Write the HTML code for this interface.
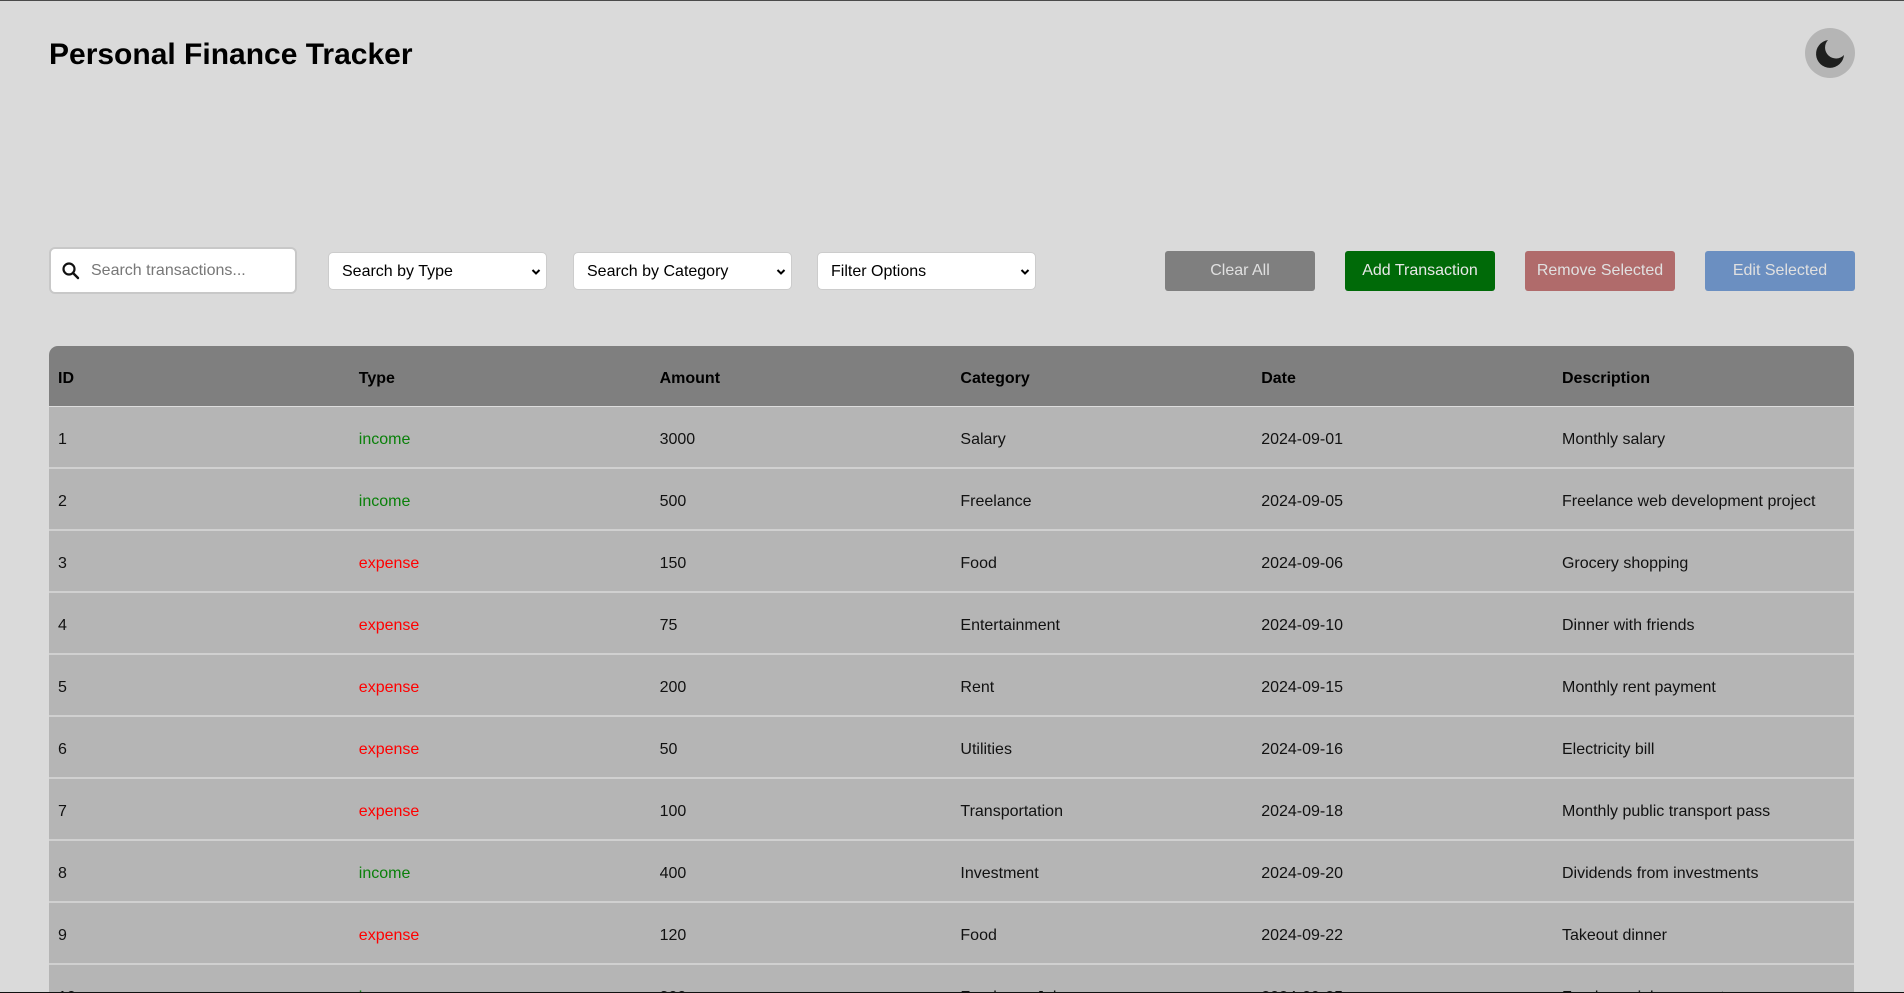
<!DOCTYPE html>
<html><head><meta charset="utf-8"><style>
*{box-sizing:border-box;margin:0;padding:0}
html,body{width:1904px;height:993px;overflow:hidden;background:#dadada;font-family:"Liberation Sans",Arial,sans-serif}
body{position:relative;border-top:1px solid #4a4a4a}
.abs{position:absolute}
h1{position:absolute;left:49px;top:36px;font-size:30px;font-weight:bold;color:#000;line-height:36px}
.moon{left:1805px;top:27px;width:50px;height:50px;border-radius:50%;background:#b5b5b5}
.search{left:49px;top:246px;width:248px;height:47px;background:#fff;border:2px solid #c8c8c8;border-radius:6px}
.search span{position:absolute;left:40px;top:13px;font-size:16px;color:#777}
.sel{top:251px;width:219px;height:38px;background:#fff;border:1px solid #ccc;border-radius:5px;font-size:16px;color:#000;padding:10px 0 0 13px}
.sel svg{position:absolute;right:5px;top:15px}
.btn{top:250px;width:150px;height:40px;border-radius:3px;font-size:16px;text-align:center;line-height:40px;color:#e0e0e0}
.table{left:49px;top:345px;width:1805px}
.hdr{height:61px;background:#7f7f7f;border-radius:9px 9px 0 0;border-bottom:1px solid #ddd;display:flex}
.row{height:62px;background:#b5b5b5;border-bottom:2px solid #d0d0d0;display:flex}
.c{width:300.8px;padding-left:9px;padding-top:3px;font-size:16px;line-height:60px;color:#111}
.hdr .c{font-weight:bold;color:#000;line-height:60px}
.in{color:#0a800a}.ex{color:#f00}
.bot{left:0;top:991px;width:1904px;height:2px;background:#111}
</style></head><body>
<h1>Personal Finance Tracker</h1>
<div class="abs moon"><svg width="50" height="50" viewBox="0 0 50 50"><path d="M23 12 A14 14 0 1 0 39 27 A9 9 0 1 1 23 12Z" fill="#1e1f1e"/></svg></div>
<div class="abs search"><svg class="abs" style="left:10px;top:12px" width="20" height="20" viewBox="0 0 20 20"><circle cx="8" cy="8" r="5.5" fill="none" stroke="#111" stroke-width="2.2"/><path d="M12 12 L17 17" stroke="#111" stroke-width="2.4" stroke-linecap="round"/></svg><span>Search transactions...</span></div>
<div class="abs sel" style="left:328px">Search by Type<svg width="10" height="8" viewBox="0 0 10 8"><path d="M1.5 2 L5 5.5 L8.5 2" stroke="#000" stroke-width="2" fill="none"/></svg></div>
<div class="abs sel" style="left:573px">Search by Category<svg width="10" height="8" viewBox="0 0 10 8"><path d="M1.5 2 L5 5.5 L8.5 2" stroke="#000" stroke-width="2" fill="none"/></svg></div>
<div class="abs sel" style="left:817px">Filter Options<svg width="10" height="8" viewBox="0 0 10 8"><path d="M1.5 2 L5 5.5 L8.5 2" stroke="#000" stroke-width="2" fill="none"/></svg></div>
<div class="abs btn" style="left:1165px;background:#7f7f7f">Clear All</div>
<div class="abs btn" style="left:1345px;background:#006a08;color:#e8e8e8">Add Transaction</div>
<div class="abs btn" style="left:1525px;background:#b06b6b">Remove Selected</div>
<div class="abs btn" style="left:1705px;background:#6b8fc1">Edit Selected</div>
<div class="abs table">
<div class="hdr"><div class="c">ID</div><div class="c">Type</div><div class="c">Amount</div><div class="c">Category</div><div class="c">Date</div><div class="c">Description</div></div>
<div class="row"><div class="c">1</div><div class="c in">income</div><div class="c">3000</div><div class="c">Salary</div><div class="c">2024-09-01</div><div class="c">Monthly salary</div></div>
<div class="row"><div class="c">2</div><div class="c in">income</div><div class="c">500</div><div class="c">Freelance</div><div class="c">2024-09-05</div><div class="c">Freelance web development project</div></div>
<div class="row"><div class="c">3</div><div class="c ex">expense</div><div class="c">150</div><div class="c">Food</div><div class="c">2024-09-06</div><div class="c">Grocery shopping</div></div>
<div class="row"><div class="c">4</div><div class="c ex">expense</div><div class="c">75</div><div class="c">Entertainment</div><div class="c">2024-09-10</div><div class="c">Dinner with friends</div></div>
<div class="row"><div class="c">5</div><div class="c ex">expense</div><div class="c">200</div><div class="c">Rent</div><div class="c">2024-09-15</div><div class="c">Monthly rent payment</div></div>
<div class="row"><div class="c">6</div><div class="c ex">expense</div><div class="c">50</div><div class="c">Utilities</div><div class="c">2024-09-16</div><div class="c">Electricity bill</div></div>
<div class="row"><div class="c">7</div><div class="c ex">expense</div><div class="c">100</div><div class="c">Transportation</div><div class="c">2024-09-18</div><div class="c">Monthly public transport pass</div></div>
<div class="row"><div class="c">8</div><div class="c in">income</div><div class="c">400</div><div class="c">Investment</div><div class="c">2024-09-20</div><div class="c">Dividends from investments</div></div>
<div class="row"><div class="c">9</div><div class="c ex">expense</div><div class="c">120</div><div class="c">Food</div><div class="c">2024-09-22</div><div class="c">Takeout dinner</div></div>
<div class="row"><div class="c">10</div><div class="c in">income</div><div class="c">300</div><div class="c">Freelance Job</div><div class="c">2024-09-25</div><div class="c">Freelance job payment</div></div>
</div>
<div class="abs bot"></div>
</body></html>
